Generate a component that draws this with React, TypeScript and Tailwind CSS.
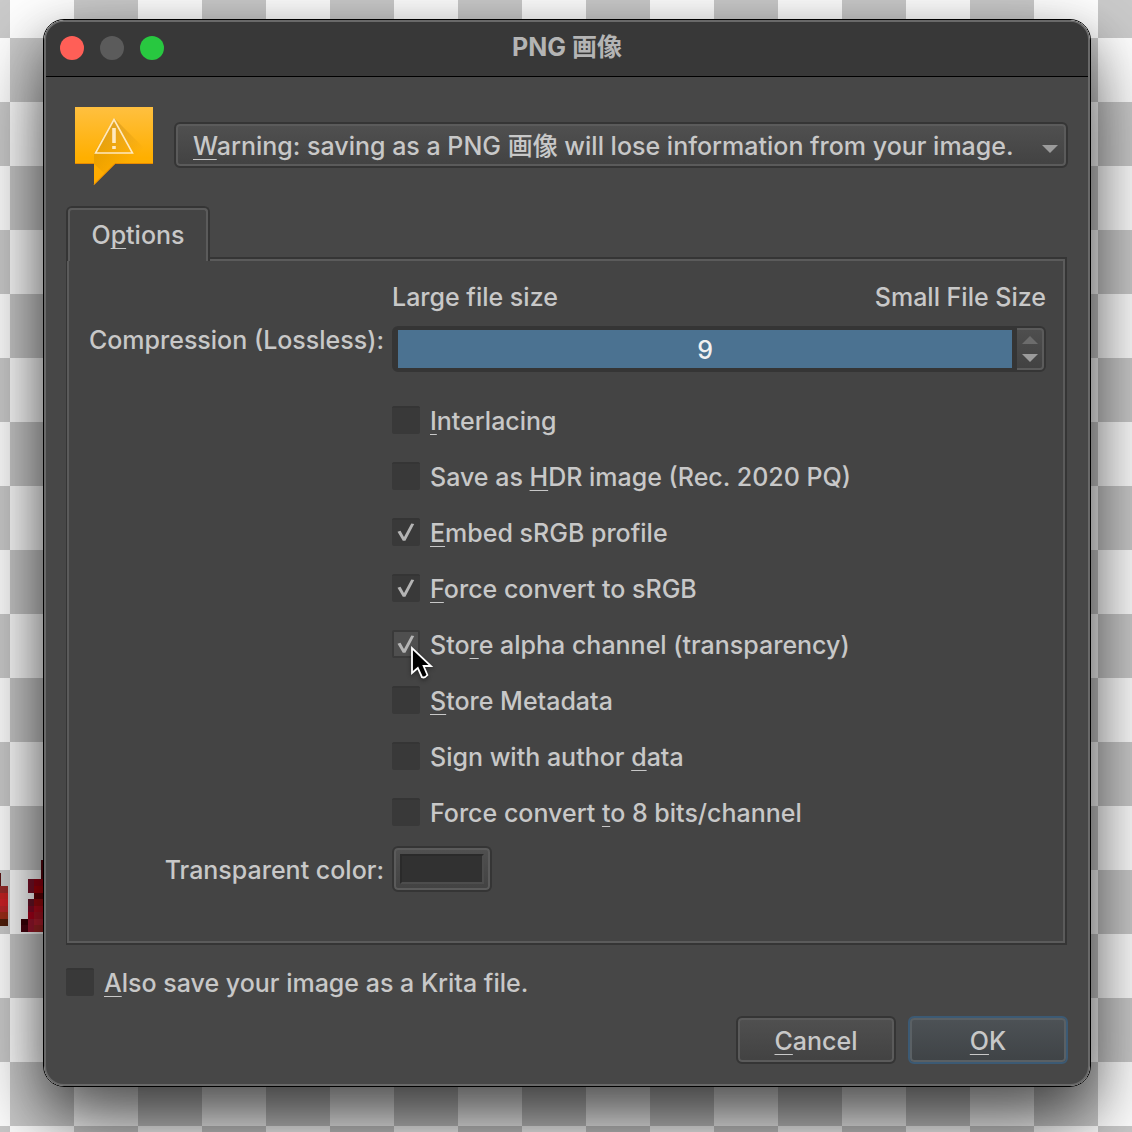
import type { ReactNode } from "react";

const U = ({ children }: { children: ReactNode }) => (
  <span className="underline decoration-1 underline-offset-[4px] [text-decoration-skip-ink:none]">{children}</span>
);

type Option = { id: string; label: ReactNode; checked?: boolean; hover?: boolean };

const options: Option[] = [
  { id: "interlacing", label: <><U>I</U>nterlacing</> },
  { id: "hdr", label: <>Save as <U>H</U>DR image (Rec. 2020 PQ)</> },
  { id: "embed", label: <><U>E</U>mbed sRGB profile</>, checked: true },
  { id: "force-srgb", label: <><U>F</U>orce convert to sRGB</>, checked: true },
  { id: "alpha", label: <>Sto<U>r</U>e alpha channel (transparency)</>, checked: true, hover: true },
  { id: "metadata", label: <><U>S</U>tore Metadata</> },
  { id: "author", label: <>Sign with author <U>d</U>ata</> },
  { id: "eight-bit", label: <>Force convert <U>t</U>o 8 bits/channel</> },
];

function Check({ id, label, checked, hover }: Option) {
  return (
    <div className="flex h-7 items-center gap-[10px]">
      <span className="relative grid size-7 shrink-0">
        <input
          id={id}
          type="checkbox"
          defaultChecked={checked}
          className={
            hover
              ? "peer col-start-1 row-start-1 size-7 appearance-none rounded-xs border-2 border-[#3a3a3a] bg-[#4f4f4f]"
              : "peer col-start-1 row-start-1 size-7 appearance-none rounded-xs border-t-2 border-[#353535] bg-[#393939]"
          }
        />
        <svg viewBox="0 0 28 28" className="pointer-events-none invisible col-start-1 row-start-1 size-7 peer-checked:visible">
          <path d="M5.5 13.8 L8.5 12.8 L12 19 L19.3 5.6 L22.2 6 L13.4 22.8 L10.8 22.8 Z" fill="#b4b4b4" />
        </svg>
        {hover && <Cursor />}
      </span>
      <label htmlFor={id} className="pt-0.5 whitespace-nowrap">{label}</label>
    </div>
  );
}

function Cursor() {
  return (
    <svg viewBox="0 0 24 36" className="pointer-events-none absolute top-[14px] left-[18px] z-10 h-9 w-6 drop-shadow-[0_2px_2px_rgba(0,0,0,0.4)]">
      <path d="M2 4V29L7.8 24L12 33.2Q14.6 34.4 17.4 31L13.6 22H21Z" fill="#000" stroke="#fff" strokeWidth="1.8" />
    </svg>
  );
}

function WarningIcon() {
  return (
    <svg viewBox="0 0 78 78" className="size-[78px] shrink-0" role="img" aria-label="Warning">
      <defs>
        <linearGradient id="bubble" x1="0" y1="0" x2="0" y2="1">
          <stop offset="0" stopColor="#ffc040" />
          <stop offset="0.65" stopColor="#ffaf00" />
          <stop offset="1" stopColor="#ffaa00" />
        </linearGradient>
        <linearGradient id="shade" x1="0" y1="0" x2="1" y2="1">
          <stop offset="0" stopColor="#8a5a00" stopOpacity="0.35" />
          <stop offset="0.7" stopColor="#8a5a00" stopOpacity="0" />
        </linearGradient>
      </defs>
      <path d="M0 0H78V57H40L19 78V57H0Z" fill="url(#bubble)" />
      <path d="M39 11L78 50V57H40L30 67L19 57V46Z" fill="url(#shade)" />
      <path d="M0 56.5H19M78 56.5H40L19 77.5" fill="none" stroke="#e88a00" />
      <path d="M39 12.5L57.5 46H20.5Z" fill="none" stroke="#ffe9bd" strokeWidth="1.6" />
      <path d="M39 21V36M39 39V42" stroke="#ffe9bd" strokeWidth="3.6" />
    </svg>
  );
}

const pixels: [number, number, number, number, string][] = [
  [0, 13, 1, 13, "#5c1414"], [0, 26, 8, 7, "#942a28"], [0, 33, 8, 6, "#c02222"], [0, 39, 8, 7, "#c82026"],
  [0, 46, 8, 6, "#b42428"], [0, 52, 8, 7, "#982c18"], [0, 59, 8, 7, "#4f1e0c"],
  [41, 0, 2, 19, "#5a0810"], [28, 19, 6, 14, "#7b1028"], [34, 19, 9, 7, "#980012"], [34, 26, 9, 7, "#a80008"],
  [34, 33, 9, 6, "#640006"], [28, 39, 6, 7, "#6a1428"], [34, 39, 9, 7, "#a00a10"],
  [28, 46, 6, 6, "#8a0a28"], [34, 46, 9, 6, "#b80a1c"], [28, 52, 6, 7, "#b0001c"], [34, 52, 9, 7, "#ae1424"],
  [21, 59, 7, 6, "#3a0008"], [28, 59, 6, 13, "#a01830"], [34, 59, 9, 6, "#b82030"],
  [21, 65, 7, 7, "#4a0410"], [34, 65, 9, 7, "#a02424"],
];

const raised = "border-2 border-[#353535] rounded-md bg-linear-to-b from-[#505050] to-[#424242] inset-ring-2 inset-ring-[#5b5b5b]";

export default function App() {
  return (
    <main className="relative min-h-screen overflow-hidden bg-[repeating-conic-gradient(#ffffff_0_25%,#cbcbcb_0_50%)] bg-size-[128px_128px] bg-position-[10px_38px] pt-[19px] pr-[41px] pb-[45px] pl-[43px] font-['Inter','Noto_Sans_CJK_JP',sans-serif] text-[25px] leading-7 font-medium text-[#c8c8c8]">
      <svg viewBox="0 0 43 72" className="absolute top-[860px] left-0 h-[72px] w-[43px]" shapeRendering="crispEdges" aria-hidden="true">
        {pixels.map(([x, y, w, h, fill], i) => (
          <rect key={i} x={x} y={y} width={w} height={h} fill={fill} />
        ))}
      </svg>

      <section
        role="dialog"
        aria-labelledby="title"
        className="relative overflow-hidden rounded-[21px] border border-black shadow-[0_36px_80px_rgba(0,0,0,0.65),0_16px_40px_rgba(0,0,0,0.2)]"
      >
        <div className="rounded-[20px] border-2 border-[#696969] bg-[#474747]">
          <header className="relative flex h-[55px] items-center justify-center rounded-t-[18px] border-b border-black bg-[#383838] pb-1">
            <div className="absolute top-[14px] left-[14px] flex gap-4">
              <button aria-label="Close" className="size-6 rounded-full bg-[#ff5f57]" />
              <button aria-label="Minimize" className="size-6 rounded-full bg-[#5b5b5b]" />
              <button aria-label="Zoom" className="size-6 rounded-full bg-[#28c840]" />
            </div>
            <h1 id="title" className="text-[25px] font-bold text-[#b4b4b4]">PNG 画像</h1>
          </header>

          <form className="px-5 pt-[30px] pb-5" onSubmit={(e) => e.preventDefault()}>
            <div className="flex items-start gap-[21px] pl-[9px]">
              <WarningIcon />
              <button type="button" className={`${raised} mt-[15px] flex h-[46px] min-w-0 flex-1 items-center justify-between pr-2 pl-[17px]`}>
                <span className="pt-0.5 whitespace-nowrap"><U>W</U>arning: saving as a PNG 画像 will lose information from your image.</span>
                <svg viewBox="0 0 16 8" className="mt-2 h-2 w-4 shrink-0"><path d="M0 0H16L8 8Z" fill="#9b9b9b" /></svg>
              </button>
            </div>

            <div role="tablist" className="mt-[21px] flex">
              <button
                type="button"
                role="tab"
                aria-selected="true"
                className="relative z-10 -mb-1 h-[55px] w-36 rounded-t-md border-2 border-b-0 border-[#353535] bg-[#444444]"
              >
                <span className="flex h-full items-center justify-center rounded-t-sm border-2 border-b-0 border-[#5b5b5b] pb-0.5">
                  <span>O<U>p</U>tions</span>
                </span>
              </button>
            </div>

            <div role="tabpanel" className="mr-px border-2 border-l border-[#353535]">
              <div className="grid grid-cols-[296px_minmax(0,1fr)] gap-x-2 border-2 border-[#5b5b5b] bg-[#444444] pt-[22px] pr-[17px] pb-[49px] pl-[19px]">
                <div className="col-start-2 flex justify-between">
                  <span>Large file size</span>
                  <span>Small File Size</span>
                </div>

                <label htmlFor="compression" className="mt-[15px] flex justify-end whitespace-nowrap">Compression (Lossless):</label>
                <div className="mt-[15px] flex h-[46px] rounded-md border-2 border-[#353535] bg-[#353535]">
                  <input
                    id="compression"
                    defaultValue="9"
                    className="my-[2px] mr-[5px] ml-1 min-w-0 flex-1 bg-[#4b7291] pt-0.5 text-center text-[#f0f0f0] outline-none"
                  />
                  <div className="flex w-[27px] flex-col items-center justify-center gap-[10px] rounded-r-sm border-2 border-l-0 border-[#5b5b5b] bg-linear-to-b from-[#4e4e4e] to-[#424242]">
                    <button type="button" aria-label="Increase"><svg viewBox="0 0 16 8" className="block h-2 w-4"><path d="M0 8H16L8 0Z" fill="#6c6c6c" /></svg></button>
                    <button type="button" aria-label="Decrease"><svg viewBox="0 0 16 8" className="block h-2 w-4"><path d="M0 0H16L8 8Z" fill="#9b9b9b" /></svg></button>
                  </div>
                </div>

                <div className="col-start-2 mt-[34px] flex flex-col gap-7">
                  {options.map((o) => (
                    <Check key={o.id} {...o} />
                  ))}
                </div>

                <label htmlFor="color" className="mt-[30px] text-right whitespace-nowrap">Transparent color:</label>
                <button id="color" type="button" className={`${raised} mt-5 h-[46px] w-[100px] p-[6px]`}>
                  <span className="block h-full border-2 border-t-[#2a2a2a] border-r-[#4d4d4d] border-b-[#4d4d4d] border-l-[#2a2a2a] bg-[#313131]" />
                </button>
              </div>
            </div>

            <div className="mt-[23px]">
              <Check id="krita" label={<><U>A</U>lso save your image as a Krita file.</>} />
            </div>

            <div className="mt-5 flex justify-end gap-3">
              <button type="button" className={`${raised} h-12 w-40 pt-0.5`}><U>C</U>ancel</button>
              <button type="submit" className="h-12 w-40 rounded-md border-2 border-[#3c5a74] bg-linear-to-b from-[#4d5256] to-[#3f4346] pt-0.5 inset-ring-2 inset-ring-[#5a6064]"><U>O</U>K</button>
            </div>
          </form>
        </div>
      </section>
    </main>
  );
}
